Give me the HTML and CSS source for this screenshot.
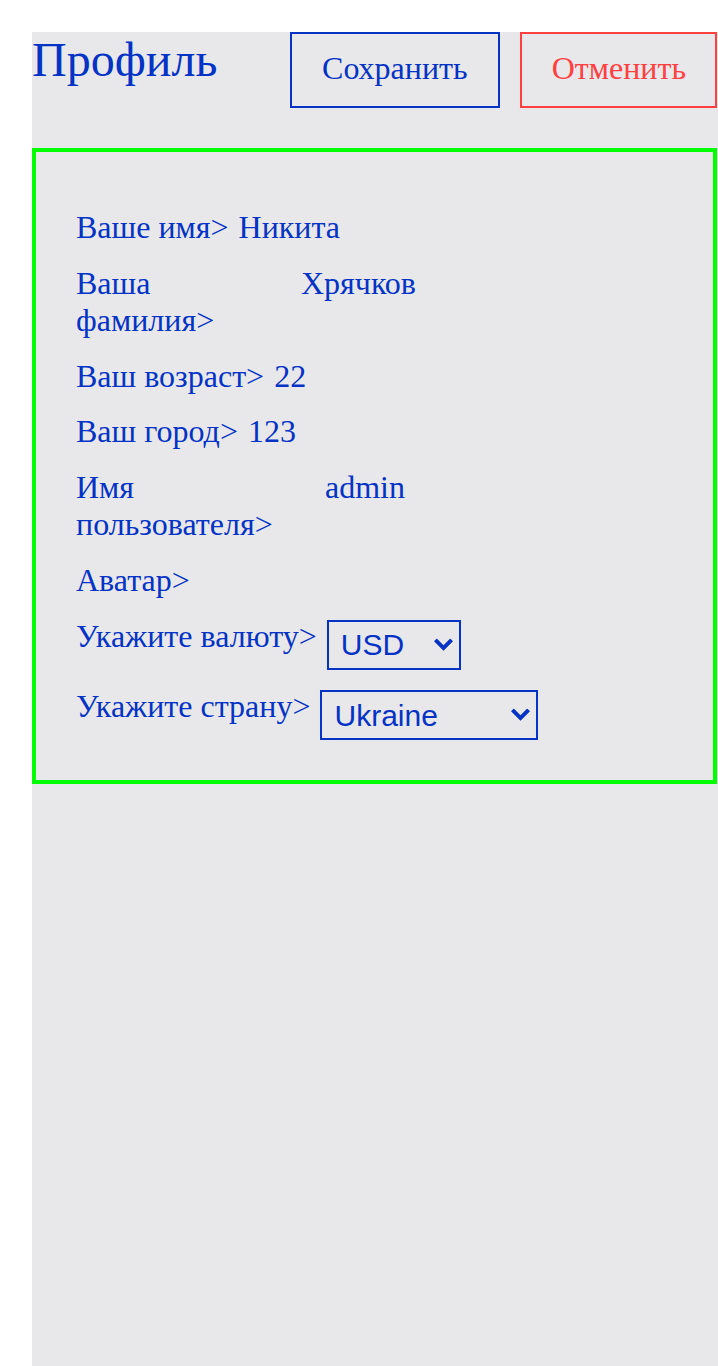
FILE: index.html
```html
<!DOCTYPE html>
<html lang="ru">
<head>
<meta charset="utf-8">
<title>Профиль</title>
<link rel="stylesheet" href="styles.css">
</head>
<body>
<div class="page">
  <header class="header">
    <h1 class="title">Профиль</h1>
    <div class="actions">
      <button class="btn btn-save" type="button">Сохранить</button>
      <button class="btn btn-cancel" type="button">Отменить</button>
    </div>
  </header>
  <section class="card">
    <div class="row">
      <span class="label">Ваше имя&gt;</span>
      <span class="value">Никита</span>
    </div>
    <div class="row">
      <span class="label label-surname">Ваша фамилия&gt;</span>
      <span class="value">Хрячков</span>
    </div>
    <div class="row">
      <span class="label">Ваш возраст&gt;</span>
      <span class="value">22</span>
    </div>
    <div class="row">
      <span class="label">Ваш город&gt;</span>
      <span class="value">123</span>
    </div>
    <div class="row">
      <span class="label label-username">Имя пользователя&gt;</span>
      <span class="value">admin</span>
    </div>
    <div class="row">
      <span class="label">Аватар&gt;</span>
    </div>
    <div class="row">
      <label class="label" for="currency">Укажите валюту&gt;</label>
      <div class="select-wrap">
        <select class="select select-currency" id="currency">
          <option>USD</option>
          <option>EUR</option>
          <option>UAH</option>
        </select>
        <svg class="chevron" viewBox="0 0 19 13" width="19" height="13" aria-hidden="true">
          <polygon points="0,2.8 2.8,0 9.5,6.7 16.2,0 19,2.8 9.5,12.3" fill="currentColor"/>
        </svg>
      </div>
    </div>
    <div class="row">
      <label class="label" for="country">Укажите страну&gt;</label>
      <div class="select-wrap">
        <select class="select select-country" id="country">
          <option>Ukraine</option>
          <option>Kazakhstan</option>
        </select>
        <svg class="chevron" viewBox="0 0 19 13" width="19" height="13" aria-hidden="true">
          <polygon points="0,2.8 2.8,0 9.5,6.7 16.2,0 19,2.8 9.5,12.3" fill="currentColor"/>
        </svg>
      </div>
    </div>
  </section>
</div>
</body>
</html>
```

FILE: styles.css
```css
html, body {
  margin: 0;
  padding: 0;
  background: #ffffff;
}

body {
  font-family: "Liberation Serif", "Times New Roman", serif;
  color: #0433c6;
}

.page {
  margin: 32px 0 0 32px;
  padding-right: 1px;
  background: #e8e8eb;
  min-height: calc(100vh - 32px);
}

.header {
  display: flex;
  justify-content: space-between;
  align-items: flex-start;
}

.title {
  margin: 0;
  font-size: 48px;
  font-weight: normal;
  line-height: normal;
  color: #0433c6;
}

.actions {
  display: flex;
  gap: 20px;
}

.btn {
  font-family: "Liberation Serif", "Times New Roman", serif;
  font-size: 32px;
  line-height: normal;
  padding: 16px 30px 19px;
  background: transparent;
  border: 2px solid #0433c6;
  color: #0433c6;
  margin: 0;
  border-radius: 0;
}

.btn-cancel {
  padding-right: 29px;
  border-color: #ff4040;
  color: #ff4040;
}

.card {
  margin-top: 40px;
  border: 4px solid #00ff00;
  padding: 57px 40px 40px;
  display: flex;
  flex-direction: column;
  gap: 18.75px;
}

.row {
  display: flex;
  align-items: flex-start;
  gap: 10px;
  font-size: 32px;
  line-height: normal;
}

.label-surname {
  width: 215px;
}

.label-username {
  width: 239px;
}

.select-wrap {
  position: relative;
  display: flex;
  margin-top: 2px;
  color: #0433c6;
}

.select {
  -webkit-appearance: none;
  appearance: none;
  font-family: "Liberation Sans", Arial, sans-serif;
  font-size: 30px;
  line-height: normal;
  color: #0433c6;
  background: transparent;
  border: 2px solid #0433c6;
  border-radius: 0;
  height: 50px;
  padding: 0 40px 0 12px;
  margin: 0;
}

.select-currency {
  width: 134px;
}

.select-country {
  width: 218px;
}

.chevron {
  position: absolute;
  right: 8px;
  top: 50%;
  transform: translateY(-50%);
  pointer-events: none;
}
```
